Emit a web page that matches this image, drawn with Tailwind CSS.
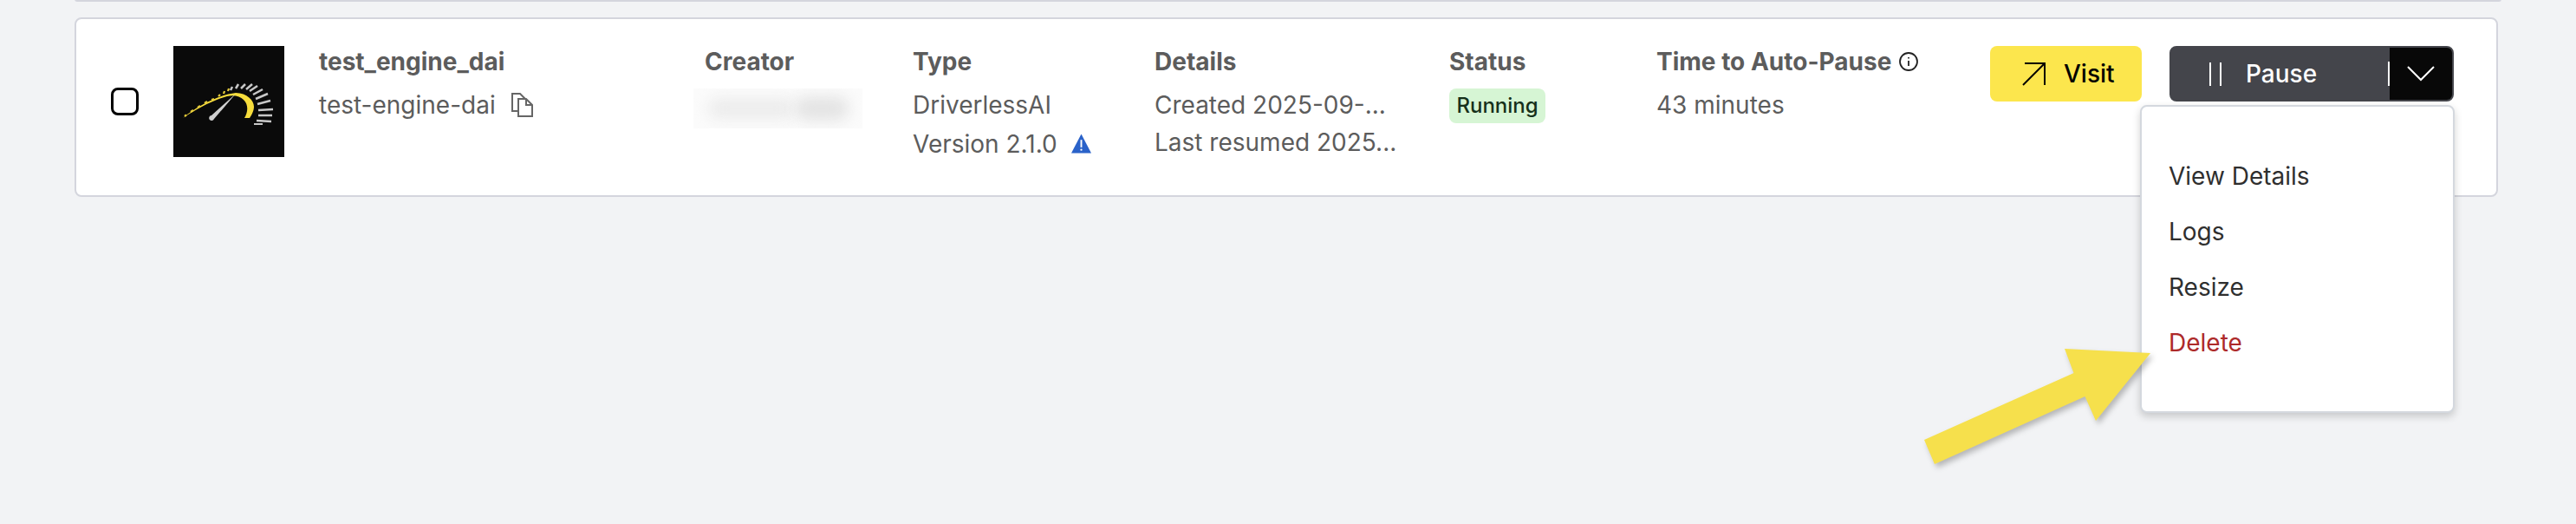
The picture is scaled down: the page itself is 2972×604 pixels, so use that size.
<!DOCTYPE html>
<html><head><meta charset="utf-8">
<script src="https://cdn.jsdelivr.net/npm/@tailwindcss/browser@4"></script>
</head>
<body class="bg-[#f2f3f5] font-['Inter',sans-serif] overflow-hidden">
<div class="relative w-[2972px] h-[604px] bg-[#f2f3f5] px-[86px]">
  <div class="h-[3px] -mt-[1px] rounded-b-lg bg-white border-b-2 border-x-2 border-[#d4d5dd]"></div>
  <div class="mt-[18px] h-[207px] w-[2796px] rounded-lg bg-white border-2 border-[#d4d5dd] flex items-start pt-[29px] text-[#5c5c5c] text-[28px] leading-[40px]">
    <div class="w-[112px] pl-[40px] pt-[50px] shrink-0"><div class="w-[32px] h-[32px] rounded-lg border-[3px] border-black bg-white"></div></div>
    <svg class="w-[128px] h-[128px] mt-[2px] shrink-0" viewBox="0 0 128 128">
      <rect width="128" height="128" fill="#0a0a0a"/>
      <path d="M11 83 C30 67 55 56 72 54 C85 54 93 63 93 70 C93 75 90 80 88 83 L82 83 C86 76 87 68 81 62 C77 58 70 56 62 58 C44 63 27 73 11 83Z" fill="#f6dc3c"/>
      <path d="M13 81 l2-1.500 M20 76 l3-2 M28 71 l3-2 M36 66 l3-2 M44 62 l3-1 M52 58 l2-2 M58 55 l1-3 M63 52 l1-3" stroke="#e6cb3a" stroke-width="2.200" fill="none"/>
      <path d="M72 55 L44 80 A3 3 0 1 0 47 84 Z" fill="#d0d0d0"/>
      <g stroke="#c8c8c8" stroke-width="2.500" fill="none">
        <path d="M66 51 l2-4"/><path d="M72 49 l3-5"/><path d="M78 49 l5-5"/><path d="M84 50 l7-6"/><path d="M88 52 l9-6"/><path d="M92 56 l11-6"/><path d="M95 61 l14-6"/><path d="M97 67 l15-4"/><path d="M98 74 l17-1"/><path d="M98 80 l16 0"/><path d="M96 86 l17 1"/><path d="M93 90 l10 0" stroke-width="2"/>
      </g>
    </svg>
    <div class="w-[485px] pl-[40px] shrink-0">
      <div class="font-bold mb-[10px]">test_engine_dai</div>
      <div class="flex items-center">test-engine-dai
        <svg class="ml-[18px] w-[26px] h-[28px]" viewBox="0 0 26 28" fill="none" stroke="#666" stroke-width="2"><path d="M7 21H1V1h9l6 6"/><path d="M8 27V7h9l7 7v13Z"/><path d="M17 7v7h7"/></svg>
      </div>
    </div>
    <div class="w-[240px] shrink-0">
      <div class="font-bold mb-[11px]">Creator</div>
      <div class="w-[195px] h-[46px] -ml-[13px] bg-[#fbfbfb] flex items-center justify-center overflow-hidden">
        <div class="w-[100px] h-[24px] rounded-full bg-[#ececec] blur-[8px]"></div>
        <div class="w-[62px] h-[28px] rounded-full bg-[#e4e4e4] blur-[8px]"></div>
      </div>
    </div>
    <div class="w-[279px] shrink-0">
      <div class="font-bold mb-[10px]">Type</div>
      <div>DriverlessAI</div>
      <div class="flex items-center mt-[5px]">Version 2.1.0
        <svg class="ml-[16px] w-[23px] h-[24px]" viewBox="0 0 24 24"><path d="M12 0 L24 23 H0 Z" fill="#2a62c9"/><path d="M12 7v9" stroke="#fff" stroke-width="2"/><circle cx="12" cy="19" r="1.200" fill="#fff"/></svg>
      </div>
    </div>
    <div class="w-[340px] shrink-0">
      <div class="font-bold mb-[10px]">Details</div>
      <div>Created 2025-09-...</div>
      <div class="mt-[3px]">Last resumed 2025...</div>
    </div>
    <div class="w-[239px] shrink-0">
      <div class="font-bold mb-[11px]">Status</div>
      <div class="w-[111px] h-[40px] rounded-lg bg-[#d6f5d4] text-[#16301a] text-[24px] font-medium leading-[40px] text-center">Running</div>
    </div>
    <div class="w-[385px] shrink-0">
      <div class="font-bold mb-[10px] flex items-center whitespace-nowrap">Time to Auto-Pause
        <svg class="ml-[8px] w-[24px] h-[24px]" viewBox="0 0 24 24" fill="none" stroke="#222" stroke-width="1.800"><circle cx="12" cy="12" r="10"/><path d="M12 11v6"/><path d="M12 7v1.500"/></svg>
      </div>
      <div>43 minutes</div>
    </div>
    <div class="w-[175px] h-[64px] mt-[2px] shrink-0 rounded-lg bg-[#fce64d] text-black font-medium flex items-center pl-[37px] gap-[21px]">
      <svg class="w-[27px] h-[27px]" viewBox="0 0 27 27" fill="none" stroke="#000" stroke-width="2"><path d="M3 1h23v25"/><path d="M26 1L1 26"/></svg>
      <span>Visit</span>
    </div>
    <div class="w-[328px] h-[64px] mt-[2px] ml-[32px] shrink-0 rounded-lg bg-[#44454b] border-2 border-[#44454b] text-white font-medium flex overflow-hidden">
      <div class="w-[250px] flex items-center pl-[44px] gap-[28px] relative">
        <svg class="w-[14px] h-[27px]" viewBox="0 0 14 27" stroke="#fff" stroke-width="2"><path d="M1 0v27M13 0v27"/></svg>
        <span>Pause</span>
      </div>
      <div class="w-[2px] h-[28px] self-center bg-white"></div>
      <div class="flex-1 bg-[#080808] flex items-center justify-center">
        <svg class="w-[32px] h-[18px]" viewBox="0 0 32 18" fill="none" stroke="#fff" stroke-width="2"><path d="M1 1l15 15L31 1"/></svg>
      </div>
    </div>
  </div>
  <div class="absolute left-[2469px] top-[122px] w-[363px] h-[355px] rounded-lg bg-white border-2 border-[#d4d8de] shadow-[0_4px_10px_rgba(0,0,0,0.18)] pt-[48px] pl-[31px] text-[28px] leading-[64px] text-[#2f2f2f]">
    <div>View Details</div>
    <div>Logs</div>
    <div>Resize</div>
    <div class="text-[#ad2a2a]">Delete</div>
  </div>
  <svg class="absolute left-0 top-0 w-[2972px] h-[604px] pointer-events-none drop-shadow-[3px_4px_3px_rgba(0,0,0,0.25)]" viewBox="0 0 2972 604"><polygon points="2481,408 2382,403 2392.500,431 2220,508 2232,536 2405.500,458 2418,486" fill="#f6e04c"/></svg>
</div>
</body></html>
